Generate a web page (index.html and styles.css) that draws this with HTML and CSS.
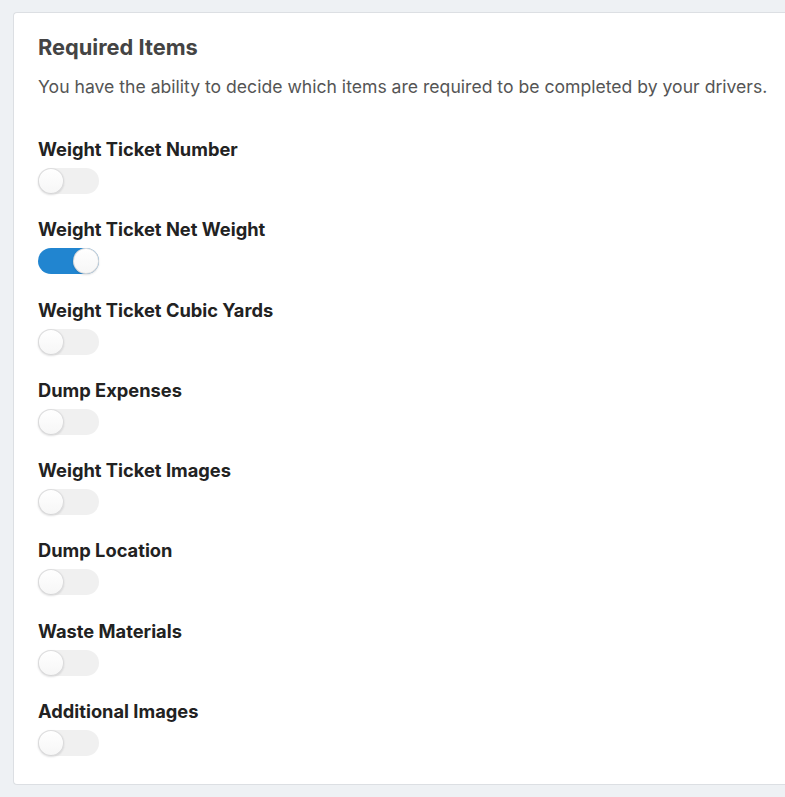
FILE: index.html
```html
<!DOCTYPE html>
<html lang="en">
<head>
    <meta charset="UTF-8">
    <meta name="viewport" content="width=device-width, initial-scale=1.0">
    <title>Required Items</title>
    <link rel="stylesheet" href="styles.css">
</head>
<body>

    <div class="card">
        <h2>Required Items</h2>
        <p class="intro">You have the ability to decide which items are required to be completed by your drivers.</p>

        <div class="field">
            <label>Weight Ticket Number</label>
            <span class="toggle"></span>
        </div>
        <div class="field">
            <label>Weight Ticket Net Weight</label>
            <span class="toggle on"></span>
        </div>
        <div class="field">
            <label>Weight Ticket Cubic Yards</label>
            <span class="toggle"></span>
        </div>
        <div class="field">
            <label>Dump Expenses</label>
            <span class="toggle"></span>
        </div>
        <div class="field">
            <label>Weight Ticket Images</label>
            <span class="toggle"></span>
        </div>
        <div class="field">
            <label>Dump Location</label>
            <span class="toggle"></span>
        </div>
        <div class="field">
            <label>Waste Materials</label>
            <span class="toggle"></span>
        </div>
        <div class="field">
            <label>Additional Images</label>
            <span class="toggle"></span>
        </div>
    </div>

</body>
</html>
```

FILE: styles.css
```css
body {
    margin: 0;
    padding: 12px 0 12px 13px;
    background-color: #eef1f4;
    font-family: Inter, "Noto Sans", sans-serif;
}
.card {
    background: white;
    border: 1px solid #dcdfe3;
    border-right: none;
    border-radius: 4px 0 0 4px;
    padding: 19px 0 28px 24px;
}
h2 {
    margin: 0;
    font-size: 21.8px;
    font-weight: 700;
    color: #444;
    line-height: 30px;
}
.intro {
    margin: 13px 0 37px 0;
    font-size: 17.6px;
    color: #555;
    line-height: 24px;
    white-space: nowrap;
}
.field {
    display: flex;
    flex-direction: column;
    align-items: flex-start;
    margin-bottom: 22.3px;
}
.field:last-child {
    margin-bottom: 0;
}
label {
    font-size: 18.3px;
    font-weight: 700;
    color: #222;
    line-height: 26px;
    margin-bottom: 6px;
}
.toggle {
    position: relative;
    width: 61px;
    height: 26px;
    border-radius: 13px;
    background: #f0f0f0;
}
.toggle::after {
    content: "";
    position: absolute;
    top: 0;
    left: 0;
    width: 26px;
    height: 26px;
    border-radius: 50%;
    background: linear-gradient(#fff, #f6f6f6);
    box-shadow: 0 1px 2px 0 rgba(34, 36, 38, 0.15), 0 0 0 1px rgba(34, 36, 38, 0.15) inset;
}
.toggle.on {
    background: #2185d0;
}
.toggle.on::after {
    left: 35px;
}
```
